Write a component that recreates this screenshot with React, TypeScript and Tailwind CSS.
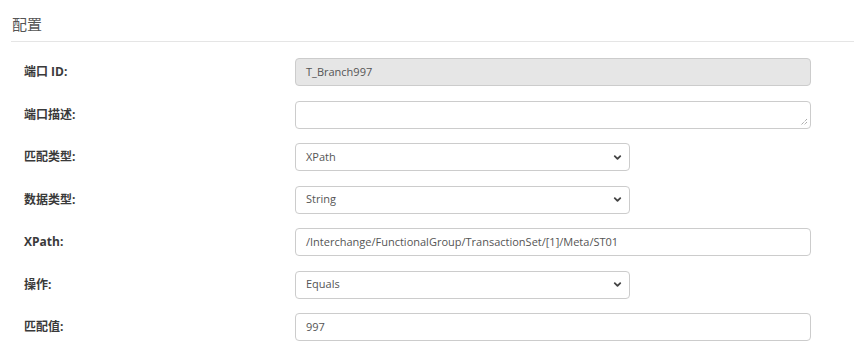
import { ChevronDown } from 'lucide-react';

const font = { fontFamily: '"Open Sans", "Noto Sans CJK SC", sans-serif' };

type Row = { label: string; kind: 'input' | 'readonly' | 'textarea' | 'select'; value: string };

const rows: Row[] = [
  { label: '端口 ID:', kind: 'readonly', value: 'T_Branch997' },
  { label: '端口描述:', kind: 'textarea', value: '' },
  { label: '匹配类型:', kind: 'select', value: 'XPath' },
  { label: '数据类型:', kind: 'select', value: 'String' },
  { label: 'XPath:', kind: 'input', value: '/Interchange/FunctionalGroup/TransactionSet/[1]/Meta/ST01' },
  { label: '操作:', kind: 'select', value: 'Equals' },
  { label: '匹配值:', kind: 'input', value: '997' },
];

function Field({ row }: { row: Row }) {
  const base = 'h-[28px] border border-[#cccccc] rounded-[4px] text-[11px] text-[#555555] px-[10px] flex items-center';
  if (row.kind === 'readonly') {
    return <div className={`${base} w-[516px] bg-[#e6e6e6]`}>{row.value}</div>;
  }
  if (row.kind === 'textarea') {
    return (
      <div className={`${base} w-[516px] bg-white relative`}>
        <svg className="absolute right-[2px] bottom-[2px]" width="8" height="8" viewBox="0 0 8 8">
          <path d="M7 1L1 7M7 4L4 7" stroke="#888" strokeWidth="1" strokeDasharray="1 1" />
        </svg>
      </div>
    );
  }
  if (row.kind === 'select') {
    return (
      <div className={`${base} w-[335px] bg-white justify-between`}>
        <span>{row.value}</span>
        <ChevronDown className="w-[11px] h-[11px] text-[#444] mr-[-4px]" strokeWidth={4} />
      </div>
    );
  }
  return <div className={`${base} w-[516px] bg-white`}>{row.value}</div>;
}

export default function App() {
  return (
    <div className="w-[854px] h-[357px] bg-white overflow-hidden" style={font}>
      <div className="ml-[11px] pl-[1px] pt-[14px] pb-[7px] border-b border-[#e5e5e5] text-[15px] leading-[20px] text-[#555555]">
        配置
      </div>
      <div className="mt-[16px] pl-[24px] flex flex-col gap-[14.5px]">
        {rows.map((row) => (
          <div key={row.label} className="flex items-center">
            <div className="w-[271px] text-[12px] font-bold text-[#3a3a3a]">{row.label}</div>
            <Field row={row} />
          </div>
        ))}
      </div>
    </div>
  );
}
